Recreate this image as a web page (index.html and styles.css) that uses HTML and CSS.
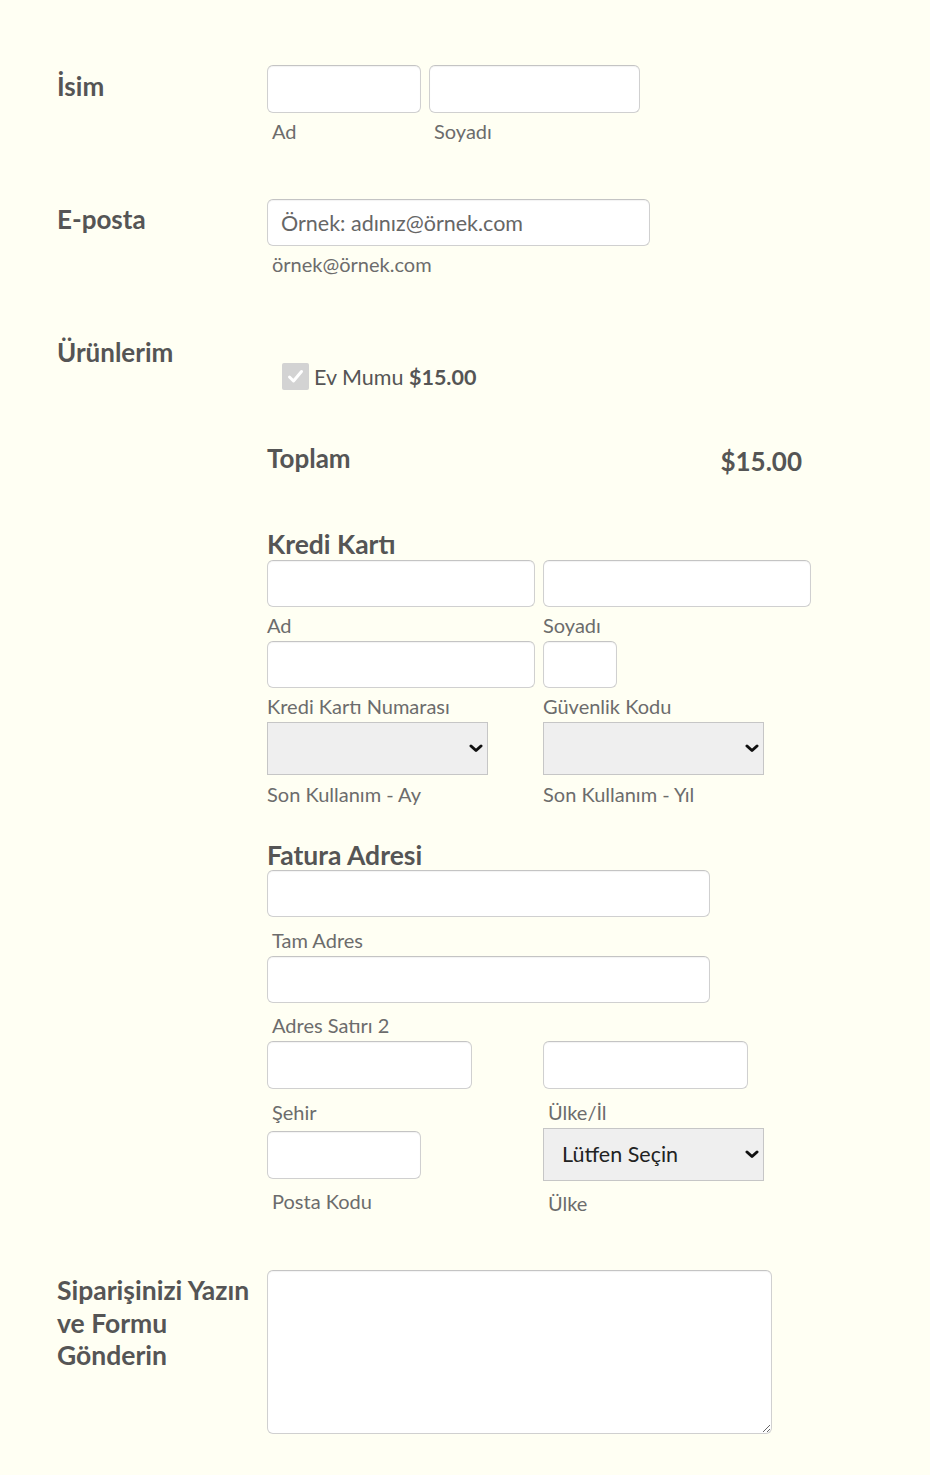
FILE: index.html
```html
<!DOCTYPE html>
<html lang="tr">
<head>
<meta charset="utf-8">
<title>Sipariş Formu</title>
<link rel="stylesheet" href="styles.css">
</head>
<body>
<form class="form">
  <div class="row row-name">
    <div class="label">İsim</div>
    <div class="content">
      <div class="pair">
        <div class="field">
          <input class="input w-154" type="text">
          <div class="sub sub-in">Ad</div>
        </div>
        <div class="field">
          <input class="input w-211" type="text">
          <div class="sub sub-in">Soyadı</div>
        </div>
      </div>
    </div>
  </div>

  <div class="row row-email">
    <div class="label">E-posta</div>
    <div class="content">
      <input class="input w-383 email" type="text" placeholder="Örnek: adınız@örnek.com">
      <div class="sub sub-in">örnek@örnek.com</div>
    </div>
  </div>

  <div class="row row-products">
    <div class="label">Ürünlerim</div>
    <div class="content products">
      <div class="product">
        <span class="check"><svg width="27" height="27" viewBox="0 0 27 27"><path d="M7.5 14 L11.5 18 L19.5 8.5" fill="none" stroke="#fff" stroke-width="3" stroke-linecap="round" stroke-linejoin="round"/></svg></span>
        <span class="pname">Ev Mumu <b>$15.00</b></span>
      </div>
      <div class="total">
        <span>Toplam</span>
        <span class="total-val">$15.00</span>
      </div>

      <div class="heading">Kredi Kartı</div>
      <div class="grid">
        <div class="field">
          <input class="input w-268" type="text">
          <div class="sub">Ad</div>
        </div>
        <div class="field">
          <input class="input w-268" type="text">
          <div class="sub">Soyadı</div>
        </div>
        <div class="field">
          <input class="input w-268" type="text">
          <div class="sub">Kredi Kartı Numarası</div>
        </div>
        <div class="field">
          <input class="input w-74" type="text">
          <div class="sub">Güvenlik Kodu</div>
        </div>
        <div class="field">
          <div class="select-wrap">
            <select class="select"><option></option></select>
            <svg class="chev" width="14" height="9" viewBox="0 0 14 9"><path d="M2 2 L7 6.5 L12 2" fill="none" stroke="#111" stroke-width="3" stroke-linecap="round" stroke-linejoin="round"/></svg>
          </div>
          <div class="sub sub-sel">Son Kullanım - Ay</div>
        </div>
        <div class="field">
          <div class="select-wrap">
            <select class="select"><option></option></select>
            <svg class="chev" width="14" height="9" viewBox="0 0 14 9"><path d="M2 2 L7 6.5 L12 2" fill="none" stroke="#111" stroke-width="3" stroke-linecap="round" stroke-linejoin="round"/></svg>
          </div>
          <div class="sub sub-sel">Son Kullanım - Yıl</div>
        </div>
      </div>

      <div class="heading heading-addr">Fatura Adresi</div>
      <div class="field">
        <input class="input w-443" type="text">
        <div class="sub sub-addr">Tam Adres</div>
      </div>
      <div class="field">
        <input class="input w-443" type="text">
        <div class="sub sub-addr">Adres Satırı 2</div>
      </div>
      <div class="grid">
        <div class="field">
          <input class="input w-205" type="text">
          <div class="sub sub-addr">Şehir</div>
        </div>
        <div class="field">
          <input class="input w-205" type="text">
          <div class="sub sub-addr">Ülke/İl</div>
        </div>
        <div class="field">
          <input class="input w-154 postal" type="text">
          <div class="sub sub-addr">Posta Kodu</div>
        </div>
        <div class="field">
          <div class="select-wrap">
            <select class="select country"><option>Lütfen Seçin</option></select>
            <svg class="chev" width="14" height="9" viewBox="0 0 14 9"><path d="M2 2 L7 6.5 L12 2" fill="none" stroke="#111" stroke-width="3" stroke-linecap="round" stroke-linejoin="round"/></svg>
          </div>
          <div class="sub sub-addr">Ülke</div>
        </div>
      </div>
    </div>
  </div>

  <div class="row row-order">
    <div class="label label-multi">Siparişinizi Yazın ve Formu Gönderin</div>
    <div class="content">
      <textarea class="textarea"></textarea>
    </div>
  </div>
</form>
</body>
</html>
```

FILE: styles.css
```css
* { box-sizing: border-box; }

html, body {
  margin: 0;
  padding: 0;
  background: #fffff3;
}

body {
  font-family: Lato, "Open Sans", sans-serif;
  color: #555;
}

.form {
  padding: 65px 0 40px 57px;
}

.row {
  display: flex;
  align-items: flex-start;
}

.label {
  width: 210px;
  flex: none;
  font-size: 26px;
  font-weight: 700;
  line-height: 31px;
  color: #555;
  padding-top: 6px;
}

.label-multi {
  font-size: 26.5px;
  line-height: 32.5px;
  padding-top: 4px;
  padding-right: 6px;
}

.content {
  flex: none;
}

.row-email { margin-top: 52px; }
.row-email .label { padding-top: 5px; }

.row-products { margin-top: 56.5px; }
.row-products .label { padding-top: 0; }

.row-order { margin-top: 51px; }

.pair {
  display: flex;
  gap: 8px;
}

.field {
  display: flex;
  flex-direction: column;
  align-items: flex-start;
}

.input {
  display: block;
  height: 48px;
  background: #fff;
  border: 1px solid #d0d0d0;
  border-top-color: #c4c4c4;
  border-radius: 6px;
  box-shadow: inset 0 1px 1px rgba(0, 0, 0, 0.05);
  font-family: inherit;
  font-size: 21.5px;
  color: #555;
  padding: 0 13px;
}

.input::placeholder { color: #666; }

.email { height: 47px; }

.w-154 { width: 154px; }
.w-211 { width: 211px; }
.w-383 { width: 383px; }
.w-268 { width: 268px; height: 47px; }
.w-74 { width: 74px; height: 47px; }
.w-443 { width: 443px; height: 47px; }
.w-205 { width: 205px; }

.sub {
  font-size: 20px;
  line-height: 24px;
  color: #6c6c6c;
  margin-top: 6px;
  margin-bottom: 4px;
}

.sub-in { padding-left: 5px; }

.sub-sel { margin-top: 7px; }

.sub-addr {
  padding-left: 5px;
  margin-top: 10.5px;
  margin-bottom: 4px;
}

.products {
  padding-top: 26.5px;
}

.product {
  display: flex;
  align-items: center;
  padding-left: 15px;
  height: 27px;
}

.check {
  display: block;
  width: 27px;
  height: 27px;
  background: #d3d3d3;
  border-radius: 2px;
  margin-right: 5px;
}

.check svg { display: block; }

.pname {
  font-size: 21.5px;
  color: #555;
}

.pname b { font-weight: 700; }

.total {
  display: flex;
  justify-content: space-between;
  align-items: baseline;
  width: 535px;
  margin-top: 52.5px;
  font-size: 26px;
  font-weight: 700;
  line-height: 31px;
}

.total-val {
  position: relative;
  top: 3px;
}

.heading {
  font-size: 26.5px;
  font-weight: 700;
  line-height: 31px;
  margin-top: 55px;
  margin-bottom: 0.5px;
}

.heading-addr {
  line-height: 30px;
  margin-top: 30px;
  margin-bottom: 0;
}

.grid {
  display: grid;
  grid-template-columns: 268px 268px;
  column-gap: 8px;
}

.select-wrap {
  position: relative;
  width: 221px;
  height: 53px;
}

.select {
  display: block;
  -webkit-appearance: none;
  appearance: none;
  width: 221px;
  height: 53px;
  background-color: #efefef;
  border: 1px solid #c6c6c6;
  border-radius: 0;
  font-family: inherit;
  font-size: 21.5px;
  color: #222;
  padding: 0 30px 0 18px;
  outline: none;
}

.chev {
  position: absolute;
  right: 5px;
  top: 22px;
  pointer-events: none;
}

.postal { margin-top: 3px; }

.textarea {
  display: block;
  width: 505px;
  height: 164px;
  background: #fff;
  border: 1px solid #d0d0d0;
  border-top-color: #c4c4c4;
  border-radius: 6px;
  box-shadow: inset 0 1px 1px rgba(0, 0, 0, 0.05);
  font-family: inherit;
  font-size: 18px;
}
```
